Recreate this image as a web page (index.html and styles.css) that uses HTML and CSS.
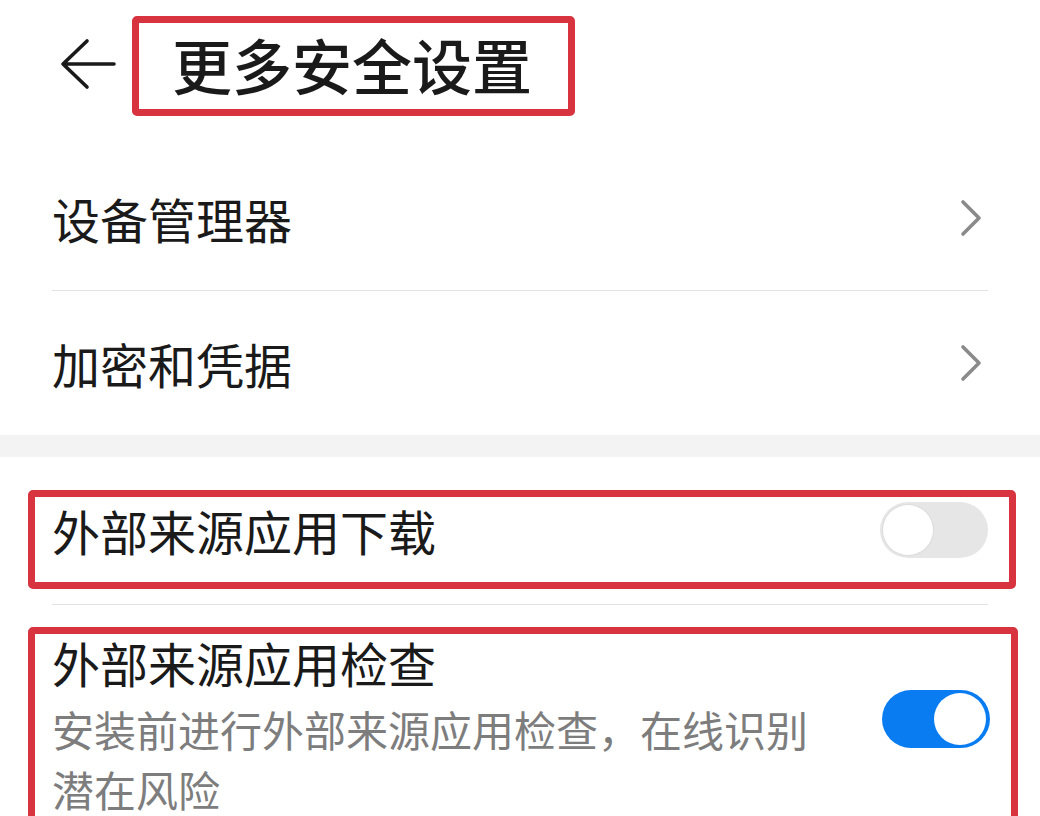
FILE: index.html
```html
<!DOCTYPE html>
<html lang="zh-CN">
<head>
  <meta charset="UTF-8" />
  <meta name="viewport" content="width=device-width, initial-scale=1.0"/>
  <title>更多安全设置</title>
  <link rel="stylesheet" href="styles.css">
</head>
<body>
  <div class="header">
    <svg class="back" width="56" height="52" viewBox="0 0 56 52">
      <path d="M27 3 L3 26 L27 49 M3 26 L54 26" fill="none" stroke="#1a1a1a" stroke-width="3.6" stroke-linecap="round" stroke-linejoin="round"/>
    </svg>
    <h1 class="page-title">更多安全设置</h1>
  </div>

  <div class="list first">
    <div class="row line">
      <span class="label">设备管理器</span>
      <svg class="chevron" width="22" height="38" viewBox="0 0 22 38">
        <path d="M3 3 L19 19 L3 35" fill="none" stroke="#8a8a8a" stroke-width="3.6" stroke-linecap="round" stroke-linejoin="round"/>
      </svg>
    </div>
    <div class="row">
      <span class="label">加密和凭据</span>
      <svg class="chevron" width="22" height="38" viewBox="0 0 22 38">
        <path d="M3 3 L19 19 L3 35" fill="none" stroke="#8a8a8a" stroke-width="3.6" stroke-linecap="round" stroke-linejoin="round"/>
      </svg>
    </div>
  </div>

  <div class="band"></div>

  <div class="list">
    <div class="row line mark-a">
      <span class="label">外部来源应用下载</span>
      <div class="switch"><div class="knob"></div></div>
    </div>
    <div class="row tall mark-b">
      <div class="texts">
        <div class="label">外部来源应用检查</div>
        <div class="desc">安装前进行外部来源应用检查，在线识别潜在风险</div>
      </div>
      <div class="switch on"><div class="knob"></div></div>
    </div>
  </div>
</body>
</html>
```

FILE: styles.css
```css
body {
  margin: 0;
  padding: 0;
  font-family: "Noto Sans CJK SC", "Noto Sans", sans-serif;
  background-color: #fff;
  color: #1a1a1a;
}
.header {
  display: flex;
  align-items: center;
  padding: 16px 0 0 60px;
}
.back {
  display: block;
  margin-top: -4px;
}
.page-title {
  margin: 0 0 0 16px;
  height: 100px;
  box-sizing: border-box;
  border: 7px solid #d8343f;
  border-radius: 5px;
  padding: 0 36px 0 33px;
  font-size: 60px;
  font-weight: 500;
  line-height: 82px;
}
.list {
  margin: 0 52px;
}
.list.first {
  margin-top: 30px;
}
.row {
  position: relative;
  display: flex;
  align-items: center;
  justify-content: space-between;
  height: 144px;
}
.row.line {
  border-bottom: 1px solid #e2e2e2;
}
.label {
  font-size: 48px;
  line-height: 60px;
}
.chevron {
  display: block;
  margin-right: 6px;
}
.band {
  height: 22px;
  background-color: #f3f3f3;
}
.mark-a {
  height: 145px;
  padding-bottom: 2px;
}
.mark-a::after,
.mark-b::after {
  content: "";
  position: absolute;
  border: 7px solid #d8343f;
  border-radius: 5px;
}
.mark-a::after {
  left: -24px;
  right: -28px;
  top: 33px;
  bottom: 15px;
}
.mark-b::after {
  left: -24px;
  right: -30px;
  top: 22px;
  bottom: -20px;
}
.row.tall {
  height: auto;
  align-items: center;
  padding-top: 27px;
}
.texts {
  flex: 1;
}
.desc {
  margin-top: 7px;
  width: 770px;
  font-size: 42px;
  line-height: 60px;
  color: #7d7d7d;
}
.switch {
  flex: none;
  width: 108px;
  height: 56px;
  border-radius: 28px;
  background-color: #e6e6e6;
  box-sizing: border-box;
  padding: 3px;
}
.knob {
  width: 50px;
  height: 50px;
  border-radius: 50%;
  background-color: #fff;
  box-shadow: 0 0 0 1px #dcdcdc;
}
.switch.on {
  height: 58px;
  border-radius: 29px;
  background-color: #0a7cf2;
  padding: 3px 4px;
  margin-bottom: 14px;
  margin-left: 60px;
}
.switch.on .knob {
  margin-left: auto;
  width: 52px;
  height: 52px;
  box-shadow: none;
}
```
